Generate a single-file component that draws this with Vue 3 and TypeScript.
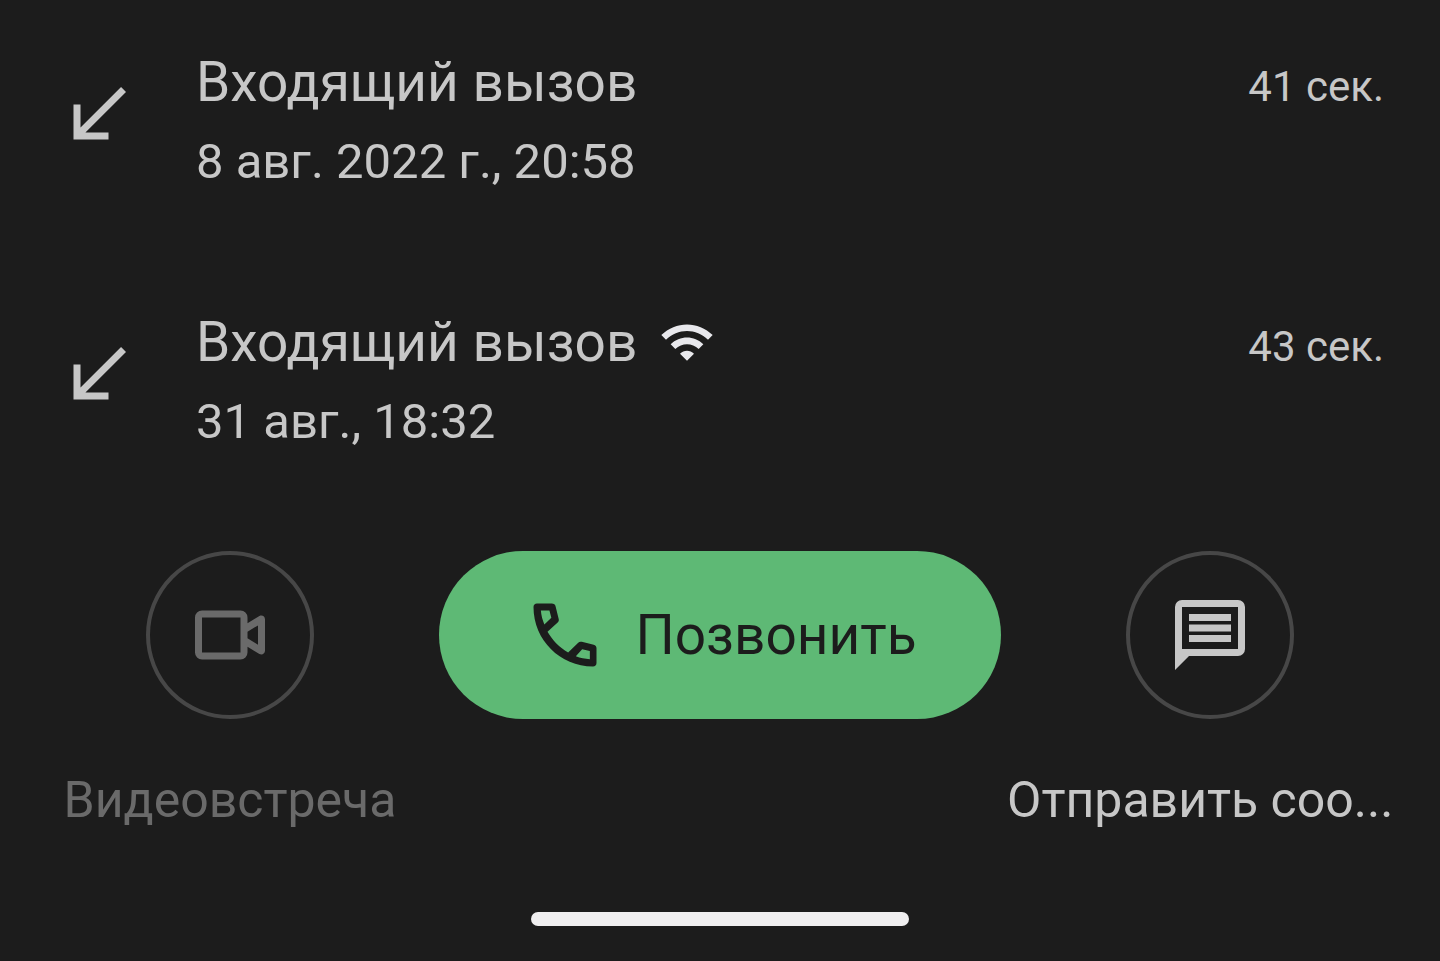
<script setup lang="ts">
interface CallEntry {
  id: number
  title: string
  date: string
  duration: string
  overWifi: boolean
}

const calls: CallEntry[] = [
  { id: 1, title: 'Входящий вызов', date: '8 авг. 2022 г., 20:58', duration: '41 сек.', overWifi: false },
  { id: 2, title: 'Входящий вызов', date: '31 авг., 18:32', duration: '43 сек.', overWifi: true },
]
</script>

<template>
  <main class="screen">
    <ul class="history">
      <li v-for="call in calls" :key="call.id" class="entry">
        <svg class="icon" viewBox="0 0 24 24" aria-hidden="true">
          <path d="M20 5.41 18.59 4 7 15.59V9H5v10h10v-2H8.41z" />
        </svg>
        <div class="details">
          <div class="title">
            <span>{{ call.title }}</span>
            <svg v-if="call.overWifi" class="wifi" viewBox="0 0 24 24" role="img" aria-label="Wi-Fi">
              <path d="M1 9l2 2c4.97-4.97 13.03-4.97 18 0l2-2C16.93 2.93 7.08 2.93 1 9zm8 8l3 3 3-3c-1.65-1.66-4.34-1.66-6 0zm-4-4l2 2c2.76-2.76 7.24-2.76 10 0l2-2C15.14 9.14 8.87 9.14 5 13z" />
            </svg>
          </div>
          <div class="date">{{ call.date }}</div>
        </div>
        <div class="duration">{{ call.duration }}</div>
      </li>
    </ul>

    <div class="actions">
      <div class="action">
        <button id="video" class="round" type="button" disabled aria-labelledby="video-label">
          <svg class="icon" viewBox="0 0 24 24" aria-hidden="true">
            <path fill-rule="evenodd" d="M4 5h11a2 2 0 0 1 2 2v1.65l3.4-2.1c.8-.35 1.6.1 1.6 1v8.9c0 .9-.8 1.35-1.6 1L17 15.35V17a2 2 0 0 1-2 2H4a2 2 0 0 1-2-2V7a2 2 0 0 1 2-2zM4 7v10h11V7zM20 9.25l-3 1.8v1.9l3 1.8z" />
          </svg>
        </button>
        <label id="video-label" class="label muted" for="video">Видеовстреча</label>
      </div>

      <button class="call" type="button">
        <svg class="icon" viewBox="0 0 24 24" aria-hidden="true">
          <path fill-rule="evenodd" d="M4 3h4.2c.6 0 1 .3 1.1.8l.9 3.6c.1.4 0 .7-.3 1L7 11.05c1.4 2.4 3.4 4.5 5.9 5.95l2.8-2.75c.3-.3.7-.4 1.1-.3l3.4.8c.5.1.8.5.8 1V20c0 .6-.4 1-1 1C10.6 21 3 13.4 3 4c0-.6.4-1 1-1zM5.1 5c.1 1.4.5 2.7 1 4l2-1.9L7.55 5zM15.1 18.1c1.3.5 2.6.75 4 .85v-2.4l-2.2-.5z" />
        </svg>
        <span>Позвонить</span>
      </button>

      <div class="action">
        <button id="message" class="round light" type="button" aria-labelledby="message-label">
          <svg class="icon" viewBox="0 0 24 24" aria-hidden="true">
            <path fill-rule="evenodd" d="M4 2h16a2 2 0 0 1 2 2v12a2 2 0 0 1-2 2H6l-4 4V4a2 2 0 0 1 2-2zM4 4v12h16V4zM6 6h12v2H6zM6 9h12v2H6zM6 12h12v2H6z" />
          </svg>
        </button>
        <label id="message-label" class="label start" for="message">Отправить соо...</label>
      </div>
    </div>

    <div class="handle"></div>
  </main>
</template>

<style>
body {
  margin: 0;
  background: #1c1c1c;
}
</style>

<style scoped>
.screen {
  box-sizing: border-box;
  min-height: 100vh;
  display: flex;
  flex-direction: column;
  padding: 49px 0 35px;
  overflow: hidden;
  background: #1c1c1c;
  color: #c7c7c7;
  font-family: Roboto, "Noto Sans", sans-serif;
}

.history {
  display: flex;
  flex-direction: column;
  gap: 118px;
  margin: 0;
  padding: 0 56px;
  list-style: none;
}

.entry {
  display: flex;
  gap: 56px;
}

.icon {
  flex: none;
  width: 84px;
  height: 84px;
  fill: currentColor;
}

.entry .icon {
  margin-top: 24px;
}

.details {
  flex: 1;
}

.title {
  display: flex;
  align-items: center;
  gap: 22px;
  height: 66px;
  font-size: 55px;
  line-height: 66px;
}

.wifi {
  width: 56px;
  height: 56px;
  fill: #e8e8ec;
}

.date {
  margin-top: 18px;
  font-size: 49px;
  line-height: 58px;
}

.duration {
  font-size: 42px;
  line-height: 76px;
}

.actions {
  display: grid;
  grid-template-columns: minmax(0, 1fr) 562px minmax(0, 1fr);
  gap: 3px;
  align-items: start;
  margin-top: 100px;
  padding: 0 24px;
}

.action {
  display: flex;
  flex-direction: column;
  align-items: center;
  gap: 52px;
}

button {
  display: flex;
  align-items: center;
  justify-content: center;
  height: 168px;
  padding: 0;
  border: 0;
  border-radius: 84px;
  font: inherit;
}

.round {
  box-sizing: border-box;
  width: 168px;
  border: 4px solid #474747;
  background: transparent;
  color: #6a6a6a;
}

.light {
  color: #c7c7c7;
}

.call {
  gap: 28px;
  background: #5eb975;
  color: #1c1c1c;
  font-size: 55px;
}

.label {
  font-size: 50px;
  line-height: 58px;
  white-space: nowrap;
}

.muted {
  color: #6a6a6a;
}

.start {
  box-sizing: border-box;
  width: 100%;
  padding-left: 3px;
}

.handle {
  align-self: center;
  width: 378px;
  height: 14px;
  margin-top: auto;
  border-radius: 7px;
  background: #f0eff0;
}
</style>
